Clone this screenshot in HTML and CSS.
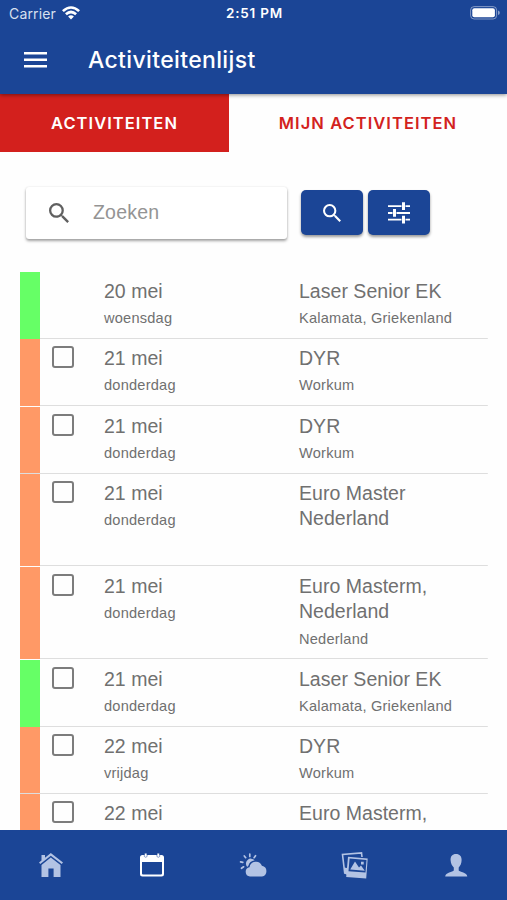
FILE: index.html
```html
<!DOCTYPE html>
<html lang="nl">
<head>
<meta charset="utf-8">
<title>Activiteitenlijst</title>
<link rel="stylesheet" href="styles.css">
</head>
<body>
<div class="app">
  <header class="header">
    <div class="status">
      <div class="carrier"><span class="carrier-name">Carrier</span>
        <svg class="wifi" viewBox="0 0 18 14"><path d="M0 4.2Q9-3.8 18 4.2L16.2 6.1Q9-.4 1.8 6.1ZM3 7.3Q9 1.8 15 7.3L13.2 9.2Q9 5.6 4.8 9.2ZM6.1 10.4Q9 8 11.9 10.4L9 13.5Z"/></svg>
      </div>
      <div class="time">2:51 PM</div>
      <svg class="battery" viewBox="0 0 30 14"><rect x=".6" y=".6" width="26" height="12.4" rx="3.5" fill="none" stroke="#fff" stroke-opacity=".45"/><rect x="2.3" y="2.3" width="22.6" height="9" rx="2"/><path d="M28 4.5q1.8.6 1.8 2.3T28 9z" opacity=".5"/></svg>
    </div>
    <div class="toolbar">
      <svg class="menu" viewBox="0 0 24 16"><path d="M0 0h23v2.5H0zM0 6.5h23V9H0zM0 13h23v2.5H0z"/></svg>
      <h1 class="title">Activiteitenlijst</h1>
    </div>
  </header>
  <nav class="tabs"><div class="tab active"><span>ACTIVITEITEN</span></div><div class="tab"><span>MIJN ACTIVITEITEN</span></div></nav>
  <div class="search">
    <div class="field"><svg class="glass" viewBox="3 3 17.5 17.5"><use href="#glass"/></svg><span>Zoeken</span></div>
    <div class="button"><svg class="glass small" viewBox="3 3 17.5 17.5"><path id="glass" d="M15.5 14h-.79l-.28-.27A6.47 6.47 0 0 0 16 9.5 6.5 6.5 0 1 0 9.5 16c1.61 0 3.09-.59 4.23-1.57l.27.28v.79l5 4.99L20.49 19zm-6 0a4.5 4.5 0 1 1 0-9 4.5 4.5 0 0 1 0 9z"/></svg></div>
    <div class="button"><svg class="tune" viewBox="0 0 22 22"><path d="M0 3.2h13.5v1.9H0zM17.5 3.2H22v1.9h-4.500zM14 .3h3V8h-3zM0 10h4.500v1.900H0zM8.500 10H22v1.900H8.500zM5 7.100h3v7.700H5zM0 16.700h13.500v1.900H0zM17.500 16.700H22v1.900h-4.500zM14 13.800h3v7.700h-3z"/></svg></div>
  </div>
  <main class="list">
    <div class="row green"><i class="bar"></i><div class="check"></div><div class="date"><b>20 mei</b><small>woensdag</small></div><div class="event"><b>Laser Senior EK</b><small>Kalamata, Griekenland</small></div></div>
    <div class="row"><i class="bar"></i><div class="check"><i class="box"></i></div><div class="date"><b>21 mei</b><small>donderdag</small></div><div class="event"><b>DYR</b><small>Workum</small></div></div>
    <div class="row"><i class="bar"></i><div class="check"><i class="box"></i></div><div class="date"><b>21 mei</b><small>donderdag</small></div><div class="event"><b>DYR</b><small>Workum</small></div></div>
    <div class="row tall"><i class="bar"></i><div class="check"><i class="box"></i></div><div class="date"><b>21 mei</b><small>donderdag</small></div><div class="event"><b>Euro Master<br>Nederland</b></div></div>
    <div class="row tall"><i class="bar"></i><div class="check"><i class="box"></i></div><div class="date"><b>21 mei</b><small>donderdag</small></div><div class="event"><b>Euro Masterm,<br>Nederland</b><small>Nederland</small></div></div>
    <div class="row green"><i class="bar"></i><div class="check"><i class="box"></i></div><div class="date"><b>21 mei</b><small>donderdag</small></div><div class="event"><b>Laser Senior EK</b><small>Kalamata, Griekenland</small></div></div>
    <div class="row"><i class="bar"></i><div class="check"><i class="box"></i></div><div class="date"><b>22 mei</b><small>vrijdag</small></div><div class="event"><b>DYR</b><small>Workum</small></div></div>
    <div class="row"><i class="bar"></i><div class="check"><i class="box"></i></div><div class="date"><b>22 mei</b></div><div class="event"><b>Euro Masterm,</b></div></div>
  </main>
  <nav class="bottom">
    <div class="item"><svg viewBox="0 0 28 28"><path d="M4.500 8.500V3H8v2.700L13.800 1 26 10.500l-1.300 1.600L13.800 3.700 3.300 12.100 2 10.500z"/><path d="M4.500 13.100 13.800 5.500l9.700 7.600V25h-6.900v-8.500h-5.200V25H4.500z"/></svg></div>
    <div class="item on"><svg viewBox="0 0 28 28"><path fill-rule="evenodd" d="M4.500 3h2.200V1.500h2V3h10.600V1.500h2V3h2.200Q26 3 26 5.500V22q0 2.500-2.500 2.500h-19Q2 24.500 2 22V5.500Q2 3 4.500 3zM4 10v11.500q0 1 1 1h18q1 0 1-1V10z"/><path d="M6.300 2.500v2q1.400 1.600 2.800 0v-2M18.900 2.500v2q1.400 1.600 2.800 0v-2" fill="none" stroke="#1b4596" stroke-width=".5"/></svg></div>
    <div class="item"><svg viewBox="0 0 28 28"><path d="M11 24.500a4.700 4.700 0 0 1-.5-9.300 6.500 6.500 0 0 1 12.400-1.500A5.500 5.500 0 0 1 23 24.500z"/><path d="M8.200 15A4.800 4.800 0 1 1 15.700 8.300Q10.500 9.200 9.500 13.500z"/><path d="M10.800 2v2.500M5.300 3.900l1.400 1.800M16.500 3.700l-1.400 2M1.600 9.800l2.200.5M2.500 16.300l2.100-1.500" fill="none" stroke="currentColor" stroke-width="1.700" stroke-linecap="round"/></svg></div>
    <div class="item"><svg viewBox="0 0 28 28"><path d="M7 22 3.700 21 1.500 2.500 20.500.9 21 5" fill="none" stroke="currentColor" stroke-width="1.600"/><path d="m3 15.500 3 .5v6.500l-2.500-.8z"/><path fill-rule="evenodd" d="m7 4.700 19.700 1.700-1.500 20.100-20-1.500zM8.600 6.400 7.500 19.200l17 1.300 1-12.600z"/><path d="m9.200 17.600 4.800-8 4 6 2-2.200 3.800 5.300zM20 9.700h2.700v2.800H20z"/></svg></div>
    <div class="item"><svg viewBox="0 0 28 28"><path d="M14 2c3.700 0 5.800 2.300 5.600 6.300-.1 3.300-1.200 5.600-2.900 7.100v3.200c1.100 1.900 8.300 1.600 8.600 5.900H3.200c.3-4.300 7.500-4 8.600-5.900v-3.200C10 13.900 8.800 11.600 8.600 8.300 8.300 4.300 10.300 2 14 2z"/></svg></div>
  </nav>
</div>
</body>
</html>
```
FILE: styles.css
```css
* { box-sizing: border-box; }
body { margin: 0; background: #fff; font-family: "Liberation Sans", sans-serif; }
svg { display: block; fill: currentColor; }
.app { height: 900px; display: flex; flex-direction: column; overflow: hidden; background: #fefefe; }
.header { height: 94px; flex: none; background: #1b4596; color: #fff; box-shadow: 0 1px 4px rgba(0,0,0,.45); z-index: 1; font-family: Inter, sans-serif; }
.status { height: 28px; display: grid; grid-template-columns: 1fr auto 1fr; align-items: center; padding: 0 7px 2px 9px; }
.carrier { display: flex; align-items: center; gap: 6px; }
.carrier-name { font-size: 14px; letter-spacing: .15px; color: #d8e0ef; }
.wifi { width: 18px; height: 14px; }
.time { font-size: 13.5px; font-weight: 600; letter-spacing: .8px; }
.battery { width: 30px; height: 14px; justify-self: end; }
.toolbar { height: 64px; display: flex; align-items: center; padding-left: 24px; gap: 40px; }
.menu { width: 24px; height: 16px; }
.title { margin: 0; font-size: 23px; font-weight: 500; letter-spacing: .36px; line-height: 30px; }
.tabs { height: 58px; flex: none; display: flex; font: 600 16.500px/20px Inter, sans-serif; letter-spacing: 1.050px; }
.tab { flex: 1; display: flex; align-items: center; justify-content: center; color: #d3221d; }
.tab.active { flex: 0 0 229px; background: #d3201d; color: #fff; }
.search { flex: none; display: flex; align-items: center; padding-left: 26px; margin-top: 34px; height: 53px; }
.field { width: 261px; height: 52px; border-radius: 3px; margin-right: 14px; background: #fff; box-shadow: 0 2px 3px rgba(0,0,0,.36), 0 0 2px rgba(0,0,0,.1); display: flex; align-items: center; padding-left: 23px; gap: 24px; color: #949494; font-size: 19.500px; letter-spacing: .2px; }
.glass { width: 20px; height: 20px; color: #606060; }
.glass.small { width: 18px; height: 18px; color: #fff; }
.button { width: 62px; height: 45px; border-radius: 5px; margin-right: 5px; background: #1b4596; color: #fff; display: flex; align-items: center; justify-content: center; box-shadow: 0 2px 3px rgba(0,0,0,.4); }
.tune { width: 22px; height: 22px; }
.list { flex: 1; min-height: 0; overflow: hidden; margin-top: 33px; padding: 0 19px 0 20.400px; color: #707070; }
.row { height: 67.250px; display: grid; grid-template-columns: 20px 63.600px 195px 1fr; background: linear-gradient(#dedede, #dedede) bottom / 100% 1.200px no-repeat; }
.row.tall { height: 92.900px; }
.bar { background: #ff9966; margin-bottom: 1px; }
.green .bar { background: #66ff66; margin-bottom: 0; }
.box { display: block; width: 22px; height: 22px; border: 2px solid #7c7c7c; border-radius: 3px; margin: 7px 0 0 11.500px; }
.date, .event { padding-top: 7px; }
b, small { display: block; white-space: nowrap; }
b { font-size: 19.500px; font-weight: 400; line-height: 25.700px; letter-spacing: .03px; }
small { font-size: 14.600px; line-height: 20px; letter-spacing: .22px; margin-top: 3.500px; }
.bottom { height: 70px; flex: none; background: #1b4596; display: grid; grid-template-columns: repeat(5, 1fr); }
.item { display: flex; justify-content: center; padding-top: 22px; color: #b3c3e4; }
.item.on { color: #fff; }
.item svg { width: 28px; height: 28px; }
```
